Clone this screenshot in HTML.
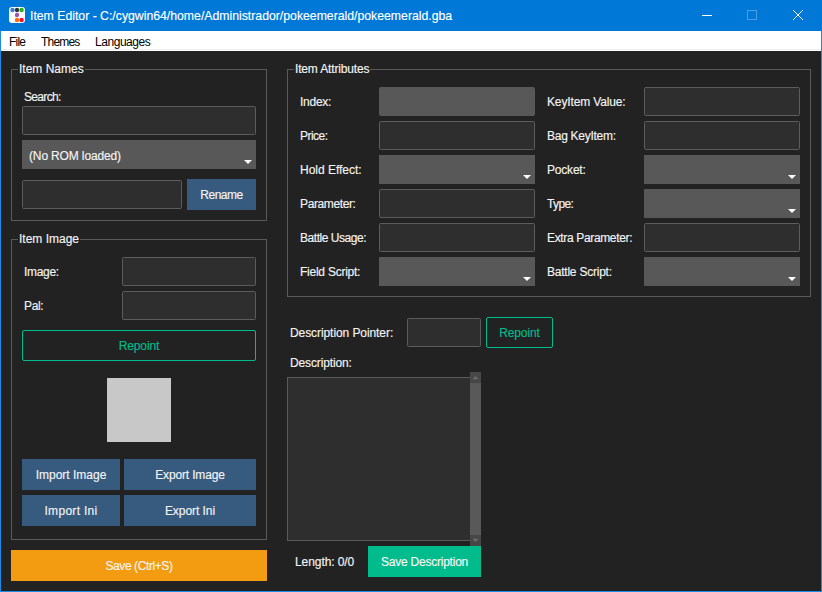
<!DOCTYPE html>
<html><head><meta charset="utf-8">
<style>
html,body{margin:0;padding:0;}
body{width:822px;height:592px;position:relative;overflow:hidden;background:#1a8ce8;font-family:"Liberation Sans",sans-serif;font-size:12px;}
.a{position:absolute;box-sizing:border-box;}
.t{position:absolute;white-space:pre;line-height:14px;color:#f4f4f4;-webkit-text-stroke:0.15px currentColor;}
.c{position:absolute;white-space:pre;line-height:14px;color:#f4f4f4;text-align:center;-webkit-text-stroke:0.15px currentColor;}
#title{left:0;top:0;width:822px;height:31px;background:#0078d7;}
#menu{left:1px;top:31px;width:820px;height:20px;background:#fff;}
#main{left:1px;top:51px;width:820px;height:540px;background:#222222;}
.grp{border:1px solid #5a5a5a;}
.gl{background:#222222;padding:0 1px;}
.inp{background:#2e2e2e;border:1px solid #5c5c5c;border-radius:1.5px;}
.cmb{background:#585858;}
.cmb:after{content:"";position:absolute;right:4px;bottom:5px;border-left:4px solid transparent;border-right:4px solid transparent;border-top:4px solid #fff;}
.btn{background:#375a7f;}
.gb{border:1px solid #00bc8c;border-radius:2px;}
</style></head><body>
<div id="title" class="a">
  <svg class="a" style="left:9px;top:7px" width="16" height="16" viewBox="0 0 16 16">
    <rect x="0" y="0" width="16" height="16" rx="3" fill="#fff"/>
    <circle cx="3.5" cy="3" r="2.2" fill="#3a7fd5"/>
    <circle cx="8" cy="3" r="2.2" fill="#333"/>
    <circle cx="12.6" cy="3" r="2.2" fill="#22b422"/>
    <circle cx="8" cy="8" r="2.2" fill="#9b59b6"/>
    <circle cx="8" cy="13" r="2.2" fill="#ff6a00"/>
    <circle cx="12.6" cy="13" r="2.2" fill="#f0103a"/>
  </svg>
  <div class="t" style="left:30px;top:9px;color:#fff;font-size:12.25px">Item Editor - C:/cygwin64/home/Administrador/pokeemerald/pokeemerald.gba</div>
  <div class="a" style="left:702px;top:15px;width:10px;height:1px;background:#fff"></div>
  <div class="a" style="left:747px;top:10px;width:10px;height:10px;border:1px solid #4d9de0"></div>
  <svg class="a" style="left:792px;top:9px" width="12" height="12" viewBox="0 0 12 12"><path d="M1 1L11 11M11 1L1 11" stroke="#fff" stroke-width="1"/></svg>
</div>
<div id="menu" class="a">
  <div class="t" style="left:8px;top:4px;color:#000;-webkit-text-stroke:0;letter-spacing:-0.8px">File</div>
  <div class="t" style="left:40px;top:4px;color:#000;-webkit-text-stroke:0;letter-spacing:-0.8px">Themes</div>
  <div class="t" style="left:94px;top:4px;color:#000;-webkit-text-stroke:0;letter-spacing:-0.45px">Languages</div>
</div>
<div class="a" style="left:1px;top:49px;width:820px;height:1px;background:#efefef"></div>
<div id="main" class="a"></div>

<!-- Item Names -->
<div class="a grp" style="left:11px;top:69px;width:256px;height:152px"></div>
<div class="t gl" style="left:18px;top:62px">Item Names</div>
<div class="t" style="left:24px;top:90px;letter-spacing:-0.667px">Search:</div>
<div class="a inp" style="left:22px;top:106px;width:234px;height:29px"></div>
<div class="a cmb" style="left:22px;top:140px;width:234px;height:29px"></div>
<div class="t" style="left:29px;top:149px;letter-spacing:-0.143px">(No ROM loaded)</div>
<div class="a inp" style="left:22px;top:180px;width:160px;height:29px"></div>
<div class="a btn" style="left:187px;top:179px;width:69px;height:31px"></div>
<div class="c" style="left:187px;top:188px;width:69px;letter-spacing:-0.480px">Rename</div>

<!-- Item Image -->
<div class="a grp" style="left:11px;top:239px;width:256px;height:301px"></div>
<div class="t gl" style="left:18px;top:232px">Item Image</div>
<div class="t" style="left:24px;top:265px;letter-spacing:-0.320px">Image:</div>
<div class="a inp" style="left:122px;top:257px;width:134px;height:29px"></div>
<div class="t" style="left:24px;top:299px;letter-spacing:-0.33px">Pal:</div>
<div class="a inp" style="left:122px;top:291px;width:134px;height:29px"></div>
<div class="a gb" style="left:22px;top:330px;width:234px;height:31px"></div>
<div class="c" style="left:22px;top:339px;width:234px;color:#00bc8c;letter-spacing:-0.100px">Repoint</div>
<div class="a" style="left:107px;top:378px;width:64px;height:64px;background:#c8c8c8"></div>
<div class="a btn" style="left:22px;top:459px;width:98px;height:31px"></div>
<div class="c" style="left:22px;top:468px;width:98px">Import Image</div>
<div class="a btn" style="left:124px;top:459px;width:132px;height:31px"></div>
<div class="c" style="left:124px;top:468px;width:132px;letter-spacing:-0.145px">Export Image</div>
<div class="a btn" style="left:22px;top:495px;width:98px;height:31px"></div>
<div class="c" style="left:22px;top:504px;width:98px;letter-spacing:0.300px">Import Ini</div>
<div class="a btn" style="left:124px;top:495px;width:132px;height:31px"></div>
<div class="c" style="left:124px;top:504px;width:132px;letter-spacing:-0.056px">Export Ini</div>
<div class="a" style="left:11px;top:550px;width:256px;height:31px;background:#f39c12"></div>
<div class="c" style="left:11px;top:559px;width:256px;letter-spacing:-0.400px">Save (Ctrl+S)</div>

<!-- Item Attributes -->
<div class="a grp" style="left:287px;top:69px;width:524px;height:228px"></div>
<div class="t gl" style="left:294px;top:62px;letter-spacing:-0.157px">Item Attributes</div>

<div class="t" style="left:300px;top:95px;letter-spacing:-0.260px">Index:</div>
<div class="a" style="left:379px;top:87px;width:156px;height:29px;background:#585858;border-radius:2px"></div>
<div class="t" style="left:300px;top:129px;letter-spacing:-0.520px">Price:</div>
<div class="a inp" style="left:379px;top:121px;width:156px;height:29px"></div>
<div class="t" style="left:300px;top:163px;letter-spacing:-0.018px">Hold Effect:</div>
<div class="a cmb" style="left:379px;top:155px;width:156px;height:29px"></div>
<div class="t" style="left:300px;top:197px;letter-spacing:-0.378px">Parameter:</div>
<div class="a inp" style="left:379px;top:189px;width:156px;height:29px"></div>
<div class="t" style="left:300px;top:231px;letter-spacing:-0.458px">Battle Usage:</div>
<div class="a inp" style="left:379px;top:223px;width:156px;height:29px"></div>
<div class="t" style="left:300px;top:265px;letter-spacing:-0.242px">Field Script:</div>
<div class="a cmb" style="left:379px;top:257px;width:156px;height:29px"></div>

<div class="t" style="left:547px;top:95px;letter-spacing:-0.138px">KeyItem Value:</div>
<div class="a inp" style="left:644px;top:87px;width:156px;height:29px"></div>
<div class="t" style="left:547px;top:129px;letter-spacing:-0.273px">Bag KeyItem:</div>
<div class="a inp" style="left:644px;top:121px;width:156px;height:29px"></div>
<div class="t" style="left:547px;top:163px;letter-spacing:-0.200px">Pocket:</div>
<div class="a cmb" style="left:644px;top:155px;width:156px;height:29px"></div>
<div class="t" style="left:547px;top:197px;letter-spacing:-0.625px">Type:</div>
<div class="a cmb" style="left:644px;top:189px;width:156px;height:29px"></div>
<div class="t" style="left:547px;top:231px;letter-spacing:-0.347px">Extra Parameter:</div>
<div class="a inp" style="left:644px;top:223px;width:156px;height:29px"></div>
<div class="t" style="left:547px;top:265px;letter-spacing:-0.231px">Battle Script:</div>
<div class="a cmb" style="left:644px;top:257px;width:156px;height:29px"></div>

<!-- Description -->
<div class="t" style="left:290px;top:326px;letter-spacing:-0.079px">Description Pointer:</div>
<div class="a inp" style="left:407px;top:318px;width:74px;height:29px"></div>
<div class="a gb" style="left:486px;top:317px;width:67px;height:31px"></div>
<div class="c" style="left:486px;top:326px;width:67px;color:#00bc8c;letter-spacing:-0.100px">Repoint</div>
<div class="t" style="left:290px;top:356px;letter-spacing:-0.136px">Description:</div>
<div class="a" style="left:287px;top:377px;width:194px;height:164px;background:#2e2e2e;border:1px solid #5a5a5a;"></div>
<div class="a" style="left:470px;top:372px;width:11px;height:174px;background:#595959"></div>
<div class="a" style="left:470px;top:372px;width:11px;height:11px;background:#474747"></div>
<div class="a" style="left:470px;top:535px;width:11px;height:11px;background:#474747"></div>
<svg class="a" style="left:470px;top:372px" width="11" height="11"><path d="M2.5 7.2L5.5 4L8.5 7.2Z" fill="#6c6c6c"/></svg>
<svg class="a" style="left:470px;top:535px" width="11" height="11"><path d="M2.5 3.8L5.5 7L8.5 3.8Z" fill="#6c6c6c"/></svg>
<div class="t" style="left:295px;top:555px;letter-spacing:-0.080px">Length: 0/0</div>
<div class="a" style="left:368px;top:546px;width:113px;height:31px;background:#00bc8c"></div>
<div class="c" style="left:368px;top:555px;width:113px;letter-spacing:-0.227px">Save Description</div>
</body></html>
